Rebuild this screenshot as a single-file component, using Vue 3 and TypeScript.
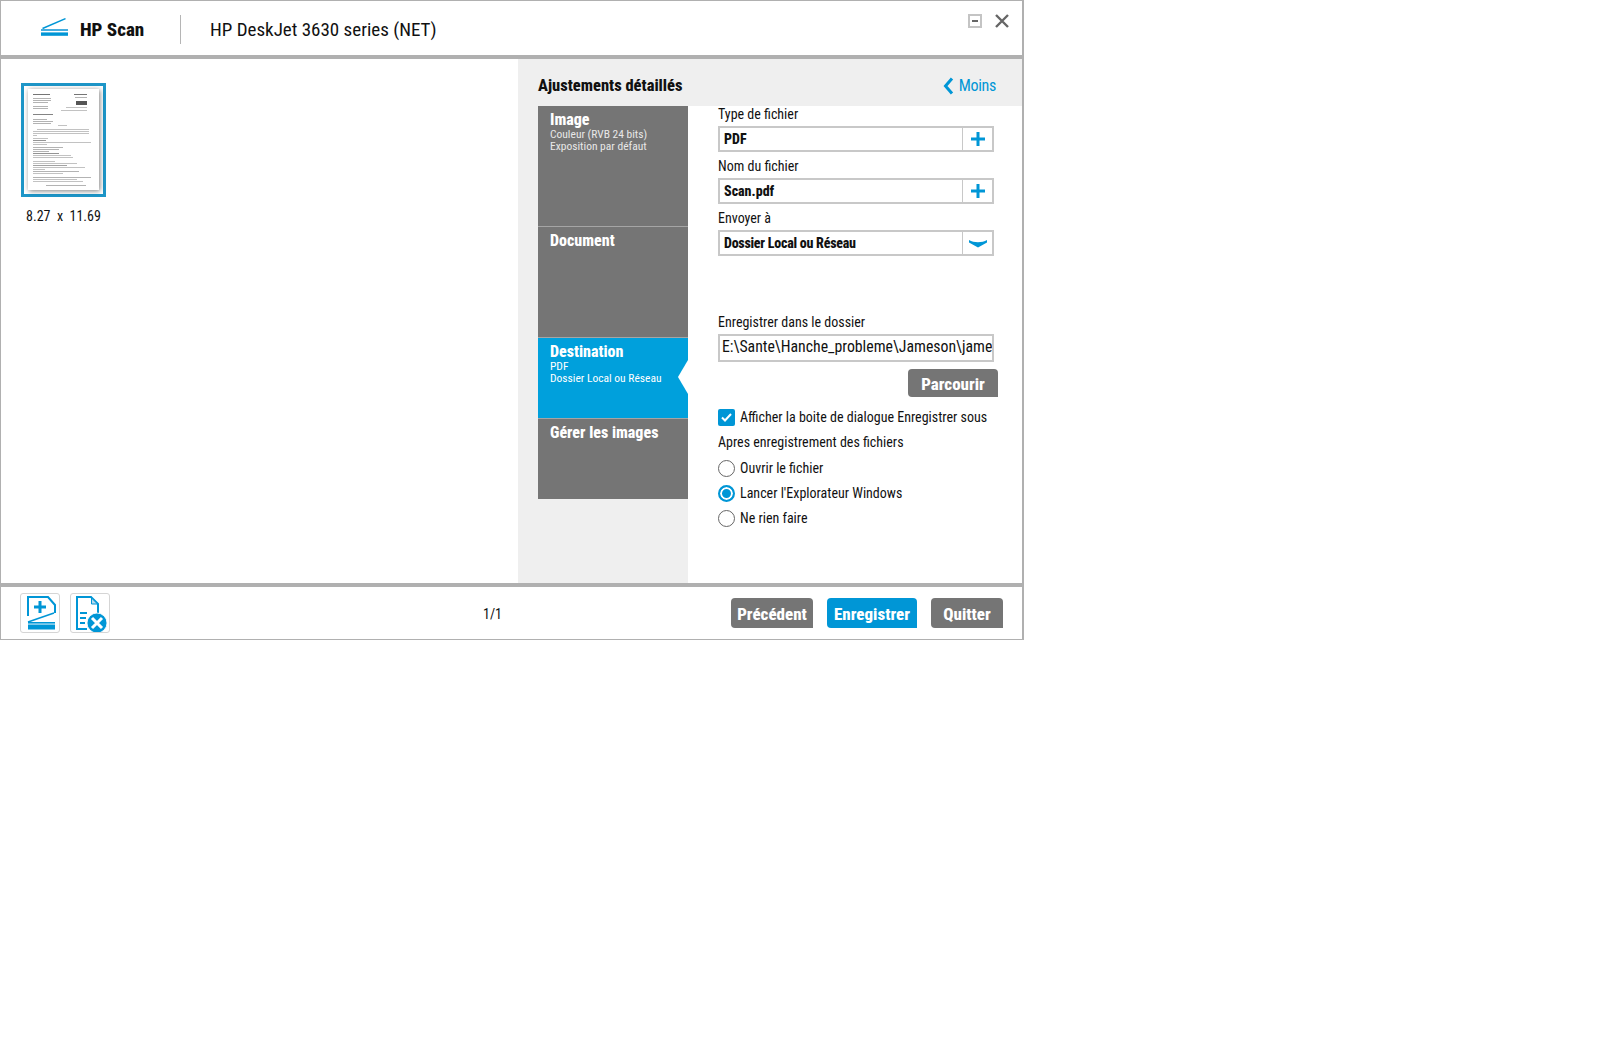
<script setup lang="ts">
interface Tab { title: string; sub: string[]; height: number; active?: boolean }
const tabs: Tab[] = [
  { title: 'Image', sub: ['Couleur (RVB 24 bits)', 'Exposition par défaut'], height: 121 },
  { title: 'Document', sub: [], height: 111 },
  { title: 'Destination', sub: ['PDF', 'Dossier Local ou Réseau'], height: 81, active: true },
  { title: 'Gérer les images', sub: [], height: 80 },
]
const radios = [
  { label: 'Ouvrir le fichier', on: false },
  { label: "Lancer l'Explorateur Windows", on: true },
  { label: 'Ne rien faire', on: false },
]
const lines: number[][] = [
  [5,5,17,.9],[46,5,13,.9],[5,9,18,.5],[5,11,18,.5],[5,13,15,.5],[47,8,12,.5],[5,17,15,.5],[5,19,15,.5],[38,18,21,.4],[33,21,26,.4],
  [5,25,20,.8],[5,30,14,.5],[5,32,20,.5],[5,34,18,.5],[30,36,9,.4],[9,40,52,.4],[5,42,56,.4],[5,44,56,.4],[5,46,4,.4],[5,49,15,.4],
  [5,51,13,.7],[5,53,58,.4],[5,55,14,.4],[5,58,30,.5],[5,60,26,.5],[5,62,16,.5],[5,64,26,.7],[5,66,38,.4],[5,68,40,.4],[5,72,22,.4],
  [5,74,44,.4],[5,76,34,.6],[5,78,52,.4],[5,80,12,.4],[5,82,46,.5],[5,84,30,.4],[5,88,58,.5],[5,90,44,.4],[5,92,50,.4],[18,96,40,.5],
]
</script>

<template>
  <div class="window">
    <header class="head">
      <svg class="logo" viewBox="0 0 27 18" width="27" height="18">
        <path d="M1.5 10.5 24.5 .6" stroke="#0096d6" stroke-width="1.4" fill="none" />
        <rect x="0" y="11" width="27" height="2" fill="#45addf" />
        <rect x="0" y="14.4" width="27" height="3.4" fill="#0096d6" />
      </svg>
      <span class="app">HP Scan</span>
      <span class="sep"></span>
      <span class="device">HP DeskJet 3630 series (NET)</span>
      <div class="winbtns">
        <span class="min"><i></i></span>
        <svg width="14" height="14" viewBox="0 0 14 14"><path d="M1 1 13 13M13 1 1 13" stroke="#666" stroke-width="2.4" /></svg>
      </div>
    </header>

    <main class="body">
      <section class="preview">
        <div class="thumb">
          <div class="page">
            <svg viewBox="0 0 71 101" width="71" height="101">
              <rect v-for="(l, i) in lines" :key="i" :x="l[0]" :y="l[1]" :width="l[2]" :height="l[3]" fill="#666" />
              <rect x="48" y="12" width="11" height="4" fill="#555" />
            </svg>
          </div>
        </div>
        <div class="size">8.27&nbsp; x &nbsp;11.69</div>
      </section>

      <section class="settings">
        <div class="set-head">
          <h2>Ajustements détaillés</h2>
          <span class="moins">
            <svg width="11" height="18" viewBox="0 0 11 18"><path d="M9 1.5 2.5 9 9 16.5" stroke="#0096d6" stroke-width="3" fill="none" /></svg>
            Moins
          </span>
        </div>
        <div class="set-body">
          <nav class="tabs">
            <div v-for="t in tabs" :key="t.title" class="tab" :class="{ active: t.active }" :style="{ height: t.height + 'px' }">
              <div class="tab-title">{{ t.title }}</div>
              <div v-for="s in t.sub" :key="s" class="tab-sub">{{ s }}</div>
              <span v-if="t.active" class="notch"></span>
            </div>
          </nav>
          <form class="form" @submit.prevent>
            <label class="lbl">Type de fichier</label>
            <div class="field"><b>PDF</b><span class="fbtn"><svg width="16" height="16" viewBox="0 0 16 16"><path d="M8 1v14M1 8h14" stroke="#0096d6" stroke-width="3" /></svg></span></div>
            <label class="lbl">Nom du fichier</label>
            <div class="field"><b>Scan.pdf</b><span class="fbtn"><svg width="16" height="16" viewBox="0 0 16 16"><path d="M8 1v14M1 8h14" stroke="#0096d6" stroke-width="3" /></svg></span></div>
            <label class="lbl">Envoyer à</label>
            <div class="field"><b class="tight">Dossier Local ou Réseau</b><span class="fbtn"><svg width="18" height="10" viewBox="0 0 18 10"><path d="M0 2C5 5 13 5 18 2L18 4.5 9 9.5 0 4.5z" fill="#0096d6" /></svg></span></div>

            <label class="lbl folder">Enregistrer dans le dossier</label>
            <div class="path"><span>E:\Sante\Hanche_probleme\Jameson\jameson_2019</span></div>
            <div class="browse-row"><button type="button" class="btn gray browse">Parcourir</button></div>

            <div class="check-row">
              <span class="check"><svg width="11" height="9" viewBox="0 0 11 9"><path d="M1 4.5 4 7.5 10 1" stroke="#fff" stroke-width="2" fill="none" /></svg></span>
              <span class="lbl-text">Afficher la boite de dialogue Enregistrer sous</span>
            </div>
            <div class="lbl-text after">Apres enregistrement des fichiers</div>
            <div v-for="r in radios" :key="r.label" class="radio-row">
              <span class="radio" :class="{ on: r.on }"></span>
              <span class="lbl-text">{{ r.label }}</span>
            </div>
          </form>
        </div>
      </section>
    </main>

    <footer class="foot">
      <div class="tools">
        <span class="tool">
          <svg width="32" height="36" viewBox="0 0 32 36">
            <path d="M4 21V2h20l7 8v8" stroke="#0096d6" stroke-width="2" fill="none" />
            <path d="M16 6v12M10 12h12" stroke="#0096d6" stroke-width="3" />
            <path d="M4 27 30 18" stroke="#0096d6" stroke-width="1.6" />
            <rect x="4" y="27" width="27" height="1.6" fill="#0096d6" />
            <rect x="4" y="29.5" width="27" height="5" fill="#0096d6" />
          </svg>
        </span>
        <span class="tool">
          <svg width="36" height="38" viewBox="0 0 36 38">
            <path d="M15 35H5V3h14l7 7v9" stroke="#0096d6" stroke-width="2" fill="none" />
            <path d="M19.5 4v6h6z" fill="#b9dcef" stroke="#0096d6" />
            <path d="M8 19h7M8 24h6M8 29h5" stroke="#0096d6" stroke-width="2" />
            <circle cx="25" cy="29" r="10" fill="#0096d6" stroke="#fff" stroke-width=".8" />
            <path d="M20 24l10 10M30 24 20 34" stroke="#fff" stroke-width="3" />
          </svg>
        </span>
      </div>
      <span class="count">1/1</span>
      <div class="actions">
        <button type="button" class="btn gray prev">Précédent</button>
        <button type="button" class="btn blue save">Enregistrer</button>
        <button type="button" class="btn gray quit">Quitter</button>
      </div>
    </footer>
  </div>
</template>

<style scoped>
.window {
  box-sizing: border-box;
  width: 1024px;
  height: 640px;
  display: flex;
  flex-direction: column;
  background: #fff;
  border: 1px solid #b0b0b0;
  border-right-width: 2px;
  color: #111;
  font-family: Roboto, sans-serif;
  font-stretch: 75%;
  font-size: 14px;
}
.head {
  height: 54px;
  flex: none;
  display: flex;
  align-items: center;
  padding-left: 40px;
}
.logo { flex: none; margin-bottom: 2px; }
.app { margin: 3px 0 0 12px; font-size: 19px; font-weight: 800; width: 100px; }
.sep { width: 1px; height: 29px; margin-top: 2px; background: #b5b5b5; }
.device { margin: 3px 0 0 29px; font-size: 19px; }
.winbtns {
  margin-left: auto;
  align-self: flex-start;
  display: flex;
  align-items: flex-start;
  gap: 13px;
  padding: 13px 13px 0 0;
}
.min {
  box-sizing: border-box;
  width: 14px;
  height: 14px;
  border: 2px solid #c4c4c4;
  display: flex;
  align-items: center;
  justify-content: center;
}
.min i { width: 6px; height: 2px; background: #666; }
.body {
  height: 532px;
  flex: none;
  display: flex;
  border-top: 4px solid #b0b0b0;
  border-bottom: 4px solid #b0b0b0;
  box-sizing: border-box;
}
.preview {
  width: 517px;
  flex: none;
  padding: 24px 0 0 20px;
  box-sizing: border-box;
}
.thumb {
  box-sizing: border-box;
  width: 85px;
  height: 114px;
  border: 3px solid #1e96c8;
  padding: 3px 0 0 4px;
}
.page {
  width: 71px;
  height: 101px;
  background: #fff;
  box-shadow: 1px 1px 5px rgba(0, 0, 0, 0.5);
}
.page svg { display: block; filter: blur(0.3px); }
.size { margin-top: 11px; width: 85px; text-align: center; font-size: 14px; }
.settings { flex: 1; display: flex; flex-direction: column; min-width: 0; }
.set-head {
  height: 47px;
  flex: none;
  background: #efefef;
  display: flex;
  align-items: center;
  justify-content: space-between;
  padding: 6px 26px 0 20px;
  box-sizing: border-box;
}
.set-head h2 { margin: 0; font-size: 16.5px; font-weight: 800; }
.moins { display: flex; align-items: center; gap: 5px; color: #0096d6; font-size: 16px; letter-spacing: -0.3px; }
.set-body { flex: 1; display: flex; min-height: 0; }
.tabs {
  width: 170px;
  flex: none;
  box-sizing: border-box;
  padding-left: 20px;
  background: #efefef;
}
.tab {
  position: relative;
  box-sizing: border-box;
  padding: 5px 0 0 12px;
  background: #757575;
  color: #fff;
  border-bottom: 1px solid #a5a5a5;
}
.tab:last-child { border-bottom: 0; }
.tab.active { background: #00a0dc; }
.tab-title { font-size: 16px; font-weight: 800; line-height: 17px; }
.tab-sub { font-size: 11.5px; line-height: 12px; color: #e8e8e8; }
.tab.active .tab-sub { color: #fff; }
.notch {
  position: absolute;
  right: 0;
  top: 22px;
  width: 0;
  height: 0;
  border-style: solid;
  border-width: 17px 10px 17px 0;
  border-color: transparent #fff transparent transparent;
}
.form { flex: 1; padding-left: 30px; min-width: 0; }
.lbl { display: block; height: 20px; line-height: 16px; font-size: 14px; }
.field {
  box-sizing: border-box;
  width: 276px;
  height: 26px;
  margin-bottom: 6px;
  border: 2px solid #c8c8c8;
  display: flex;
  align-items: center;
  justify-content: space-between;
  padding-left: 4px;
  font-size: 14px;
}
.field b { font-weight: 800; }
.field .tight { letter-spacing: -0.25px; }
.fbtn {
  width: 29px;
  height: 100%;
  border-left: 1px solid #c8c8c8;
  display: flex;
  align-items: center;
  justify-content: center;
}
.folder { margin-top: 58px; }
.path {
  box-sizing: border-box;
  width: 276px;
  height: 28px;
  border: 2px solid #c8c8c8;
  padding: 0 0 0 2px;
  font-size: 15.8px;
  line-height: 22px;
  white-space: nowrap;
  overflow: hidden;
}
.browse-row { width: 280px; display: flex; justify-content: flex-end; margin-top: 7px; }
.btn {
  border: 0;
  margin: 0;
  padding: 2px 0 0;
  color: #fff;
  font-family: inherit;
  font-stretch: inherit;
  font-weight: 800;
  font-size: 17px;
  border-radius: 4px 4px 0 4px;
}
.gray { background: #757575; }
.blue { background: #0096d6; }
.browse { width: 90px; height: 28px; }
.check-row { display: flex; align-items: center; margin-top: 12px; height: 17px; }
.check {
  width: 17px;
  height: 17px;
  border-radius: 2px;
  background: #0096d6;
  display: flex;
  align-items: center;
  justify-content: center;
  flex: none;
}
.lbl-text { font-size: 14px; margin-left: 5px; padding-bottom: 2px; }
.after { margin: 8px 0 9px; padding-bottom: 0; line-height: 17px; }
.radio-row { display: flex; align-items: center; height: 17px; margin-bottom: 8px; }
.radio {
  box-sizing: border-box;
  width: 17px;
  height: 17px;
  flex: none;
  border-radius: 50%;
  border: 1.5px solid #666;
}
.radio.on {
  border: 2px solid #0096d6;
  background: #0096d6;
  box-shadow: inset 0 0 0 2px #fff;
}
.foot {
  flex: 1;
  display: flex;
  align-items: center;
  padding-left: 19px;
}
.tools { display: flex; gap: 10px; width: 463px; }
.tool {
  box-sizing: border-box;
  width: 40px;
  height: 40px;
  border: 1px solid #d5d5d5;
  border-radius: 3px;
  display: flex;
  align-items: center;
  justify-content: center;
}
.count { font-size: 14px; width: 248px; padding-top: 1px; }
.actions { display: flex; gap: 14px; }
.actions .btn { height: 30px; }
.prev { width: 82px; }
.save { width: 90px; }
.quit { width: 72px; }
</style>
